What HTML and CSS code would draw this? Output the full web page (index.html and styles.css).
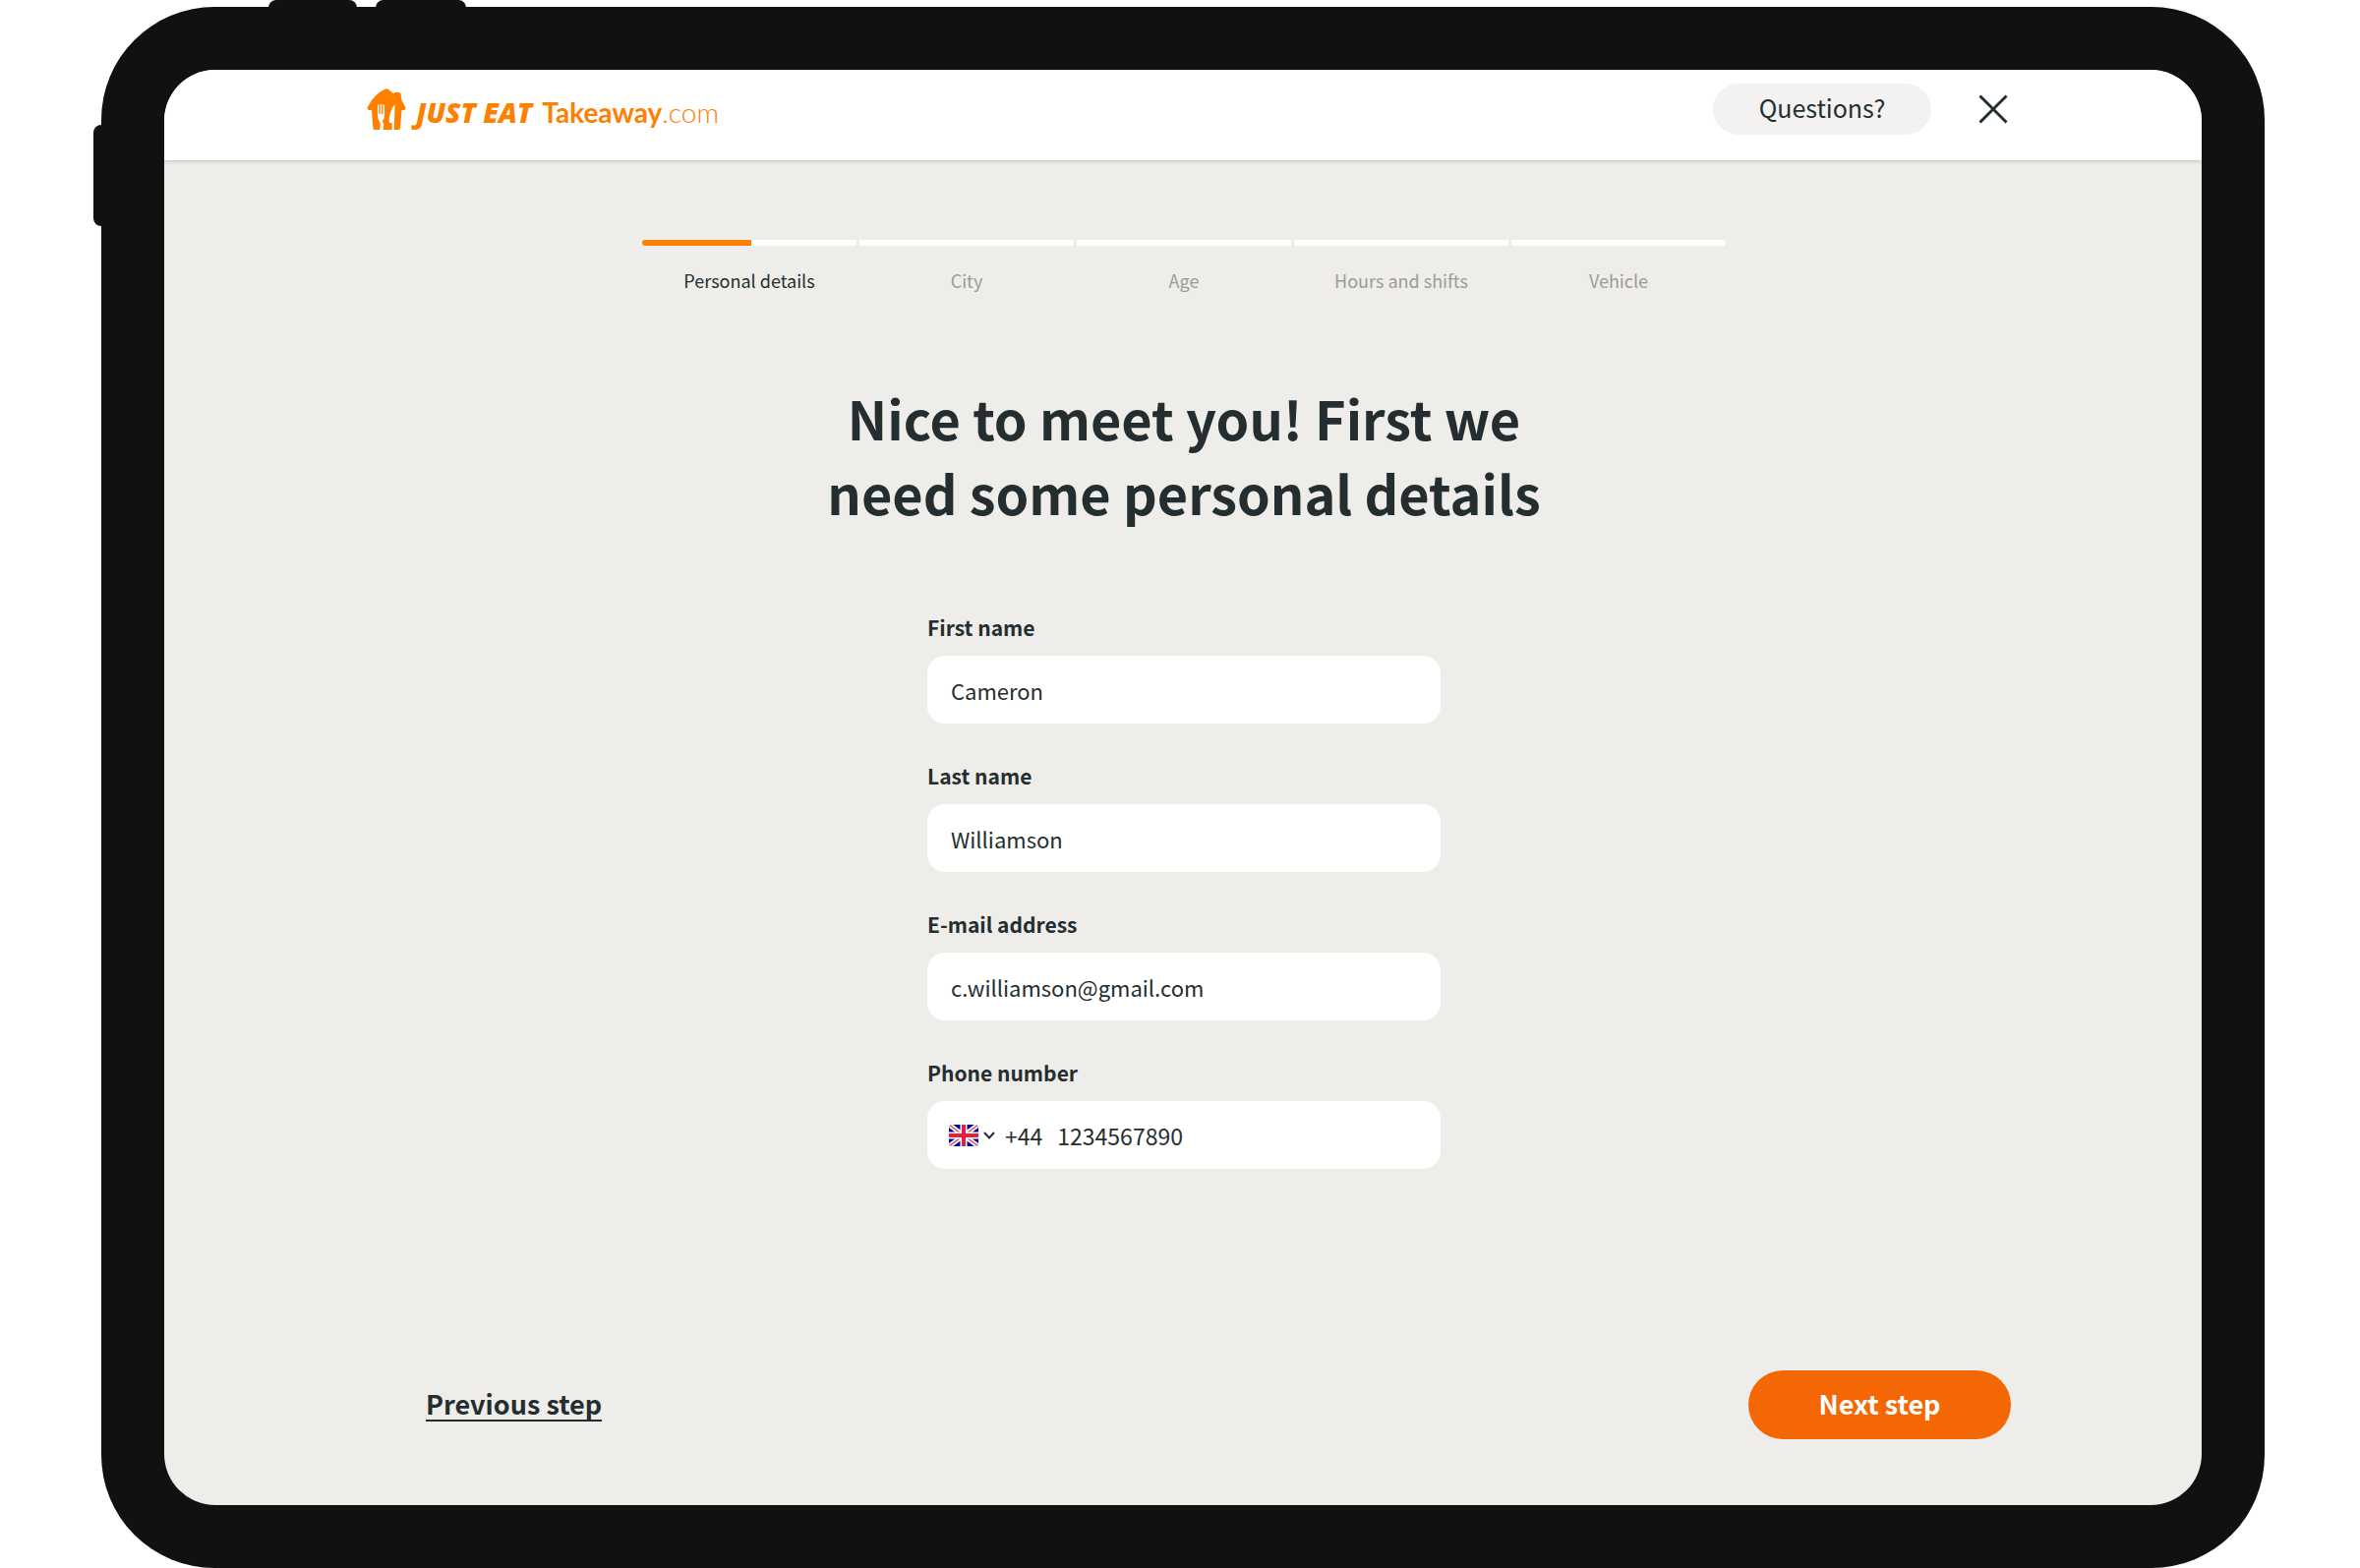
FILE: index.html
```
<!DOCTYPE html>
<html lang="en">
    <head>
        <meta charset="utf-8">
        <title>Personal details</title>
        <link rel="stylesheet" href="styles.css">
    </head>
    <body>
        <div class="tablet">
            <span class="key key-side"></span>
            <span class="key key-top"></span>
            <span class="key key-top key-second"></span>
            <div class="screen">
                <header class="header">
                    <a class="logo" href="#">
                        <svg class="logo-house" viewBox="0 0 40 42" aria-hidden="true">
                            <path fill="#ff8000" d="M18 1 Q20 -0.500 22 1 L27.500 5.500 L28 4 H33 L34.500 5 L35.500 12 L39.500 19.500 Q40 21.500 38 22 H35.500 L34 40 Q34 42 32 42 H8 Q6.500 42 6.300 40 L5 22 H2 Q0 21.500 0.500 19.500 L5 12 Q11 4 18 1 Z"/>
                            <path fill="#fff" d="M11 16.500 H12.300 V26 H13.700 V16 H15.200 V26 H16.600 V16.500 H18 V28 Q18 31 16 32.500 L15.800 34 Q17.300 35 17.300 37 L16.500 42 H13.300 L13.800 36 L13 33.500 Q11.300 31.500 11 28 Z M28.600 16 L27.700 42 H25.800 L25.500 35 H22.800 Q22 24 28.600 16 Z"/>
                        </svg>
                        <span class="logo-text">
                            <span class="logo-just">JUST EAT</span>
                            <span class="logo-take">Takeaway<span class="logo-com">.com</span></span>
                        </span>
                    </a>
                    <div class="header-actions">
                        <button class="questions" type="button">Questions?</button>
                        <button class="close" type="button" aria-label="Close">
                            <svg viewBox="0 0 30 30"><path d="M1.500 1.500 L28.500 28.500 M28.500 1.500 L1.500 28.500"/></svg>
                        </button>
                    </div>
                </header>
                <main class="main">
                    <ol class="steps">
                        <li class="step active"><span class="bar"></span>Personal details</li>
                        <li class="step"><span class="bar"></span>City</li>
                        <li class="step"><span class="bar"></span>Age</li>
                        <li class="step"><span class="bar"></span>Hours and shifts</li>
                        <li class="step"><span class="bar"></span>Vehicle</li>
                    </ol>
                    <h1 class="title">Nice to meet you! First we<br>need some personal details</h1>
                    <form class="form" id="details">
                        <label class="label" for="first">First name</label>
                        <input class="field" type="text" id="first" value="Cameron">
                        <label class="label" for="last">Last name</label>
                        <input class="field" type="text" id="last" value="Williamson">
                        <label class="label" for="email">E-mail address</label>
                        <input class="field" type="email" id="email" value="c.williamson@gmail.com">
                        <label class="label" for="phone">Phone number</label>
                        <div class="field phone">
                            <button class="country" type="button" aria-label="Country code">
                                <svg class="flag" viewBox="0 0 30 22">
                                    <clipPath id="round"><rect width="30" height="22" rx="4"/></clipPath>
                                    <g clip-path="url(#round)">
                                        <rect width="30" height="22" fill="#00009c"/>
                                        <path d="M0 0 L30 22 M30 0 L0 22" stroke="#fff" stroke-width="5"/>
                                        <path d="M0 0 L30 22 M30 0 L0 22" stroke="#e8596f" stroke-width="1.500"/>
                                        <path d="M15 0 V22 M0 11 H30" stroke="#fff" stroke-width="7"/>
                                        <path d="M15 0 V22 M0 11 H30" stroke="#e0213f" stroke-width="4"/>
                                    </g>
                                </svg>
                                <svg class="chevron" viewBox="0 0 12 8"><path d="M1 1 L6 6.500 L11 1"/></svg>
                            </button>
                            <span class="prefix">+44</span>
                            <input class="number" type="tel" id="phone" value="1234567890">
                        </div>
                    </form>
                    <div class="footer">
                        <a class="previous" href="#">Previous step</a>
                        <button class="next" type="submit" form="details">Next step</button>
                    </div>
                </main>
            </div>
        </div>
    </body>
</html>
```
FILE: styles.css
```
* {
    box-sizing: border-box;
}
body {
    margin: 0;
    height: 100vh;
    padding: 7px 97px 0 103px;
    background-color: #fff;
    color: #242e30;
    font-family: "Noto Sans CJK SC", "Noto Sans", sans-serif;
    overflow: hidden;
}
button, input {
    font-family: inherit;
    color: inherit;
    border: none;
    padding: 0;
    background: none;
}
.tablet {
    position: relative;
    height: 100%;
    padding: 64px;
    border-radius: 115px;
    background-color: #111;
}
.key {
    position: absolute;
    background-color: #111;
}
.key-side {
    left: -8px;
    top: 120px;
    width: 16px;
    height: 103px;
    border-radius: 8px;
}
.key-top {
    left: 170px;
    top: -7px;
    width: 90px;
    height: 16px;
    border-radius: 8px;
}
.key-second {
    left: 279px;
    width: 92px;
}
.screen {
    display: flex;
    flex-direction: column;
    height: 100%;
    border-radius: 52px;
    background-color: #eeede9;
    overflow: hidden;
}
.header {
    display: flex;
    justify-content: space-between;
    height: 92px;
    padding: 14px 197px 0 206px;
    background-color: #fff;
    box-shadow: 0 1px 4px rgba(0, 0, 0, 0.2);
}
.logo {
    display: flex;
    height: 52px;
    align-items: center;
    color: #ff8000;
    text-decoration: none;
}
.logo-house {
    width: 40px;
    height: 42px;
    margin-right: 10px;
}
.logo-text {
    display: flex;
    align-items: baseline;
    gap: 10px;
    padding-top: 6px;
    line-height: 40px;
}
.logo-just {
    font-family: "Open Sans", sans-serif;
    font-size: 28px;
    font-weight: 800;
    font-style: italic;
}
.logo-take {
    font-family: Lato, sans-serif;
    font-size: 28px;
    font-weight: 700;
}
.logo-com {
    font-weight: 300;
}
.header-actions {
    display: flex;
    gap: 48px;
}
.questions {
    width: 222px;
    height: 52px;
    padding-bottom: 4px;
    border-radius: 26px;
    background-color: #f3f2f1;
    font-size: 25px;
}
.close {
    display: flex;
    align-items: center;
    width: 30px;
    height: 52px;
}
.close svg {
    width: 30px;
    height: 30px;
    stroke: #242e30;
    stroke-width: 3;
}
.main {
    display: flex;
    flex: 1;
    flex-direction: column;
    align-items: center;
    padding: 81px 194px 67px 266px;
}
.steps {
    display: flex;
    gap: 3px;
    width: 1102px;
    margin: 0 70px 0 0;
    padding: 0;
    list-style: none;
}
.step {
    flex: 1;
    color: #9b9c98;
    font-size: 18px;
    line-height: 28px;
    text-align: center;
}
.bar {
    display: block;
    height: 6px;
    margin-bottom: 21px;
    background-color: #fff;
}
.step:first-child .bar {
    border-radius: 4px 0 0 4px;
}
.step:last-child .bar {
    border-radius: 0 4px 4px 0;
}
.active {
    color: #242e30;
}
.active .bar {
    background-image: linear-gradient(to right, #f97f05 51%, #fff 51%);
}
.title {
    margin: 88px 70px 84px 0;
    font-size: 54px;
    font-weight: 700;
    line-height: 76px;
    text-align: center;
}
.form {
    display: flex;
    flex-direction: column;
    width: 522px;
    margin-right: 70px;
}
.label {
    margin-bottom: 13px;
    font-size: 21px;
    font-weight: 700;
    line-height: 31px;
}
.field {
    height: 69px;
    margin-bottom: 38px;
    padding: 0 24px;
    border-radius: 18px;
    background-color: #fff;
    font-size: 22px;
}
.phone {
    display: flex;
    align-items: center;
    padding: 0 22px;
    font-size: 23px;
}
.country {
    display: flex;
    align-items: center;
    gap: 5px;
    margin-right: 10px;
}
.flag {
    width: 30px;
    height: 22px;
}
.chevron {
    width: 12px;
    height: 8px;
    fill: none;
    stroke: #242e30;
    stroke-width: 2;
}
.prefix {
    margin-right: 15px;
}
.number {
    flex: 1;
    min-width: 0;
    font-size: 23px;
}
.footer {
    display: flex;
    align-items: center;
    justify-content: space-between;
    width: 100%;
    margin-top: auto;
}
.previous {
    padding-bottom: 4px;
    color: inherit;
    font-size: 27px;
    font-weight: 700;
    text-decoration-thickness: 2px;
    text-underline-offset: 5px;
    text-decoration-skip-ink: none;
}
.next {
    width: 267px;
    height: 70px;
    padding-bottom: 4px;
    border-radius: 35px;
    background-color: #f36805;
    color: #fff;
    font-size: 27px;
    font-weight: 700;
}
```
